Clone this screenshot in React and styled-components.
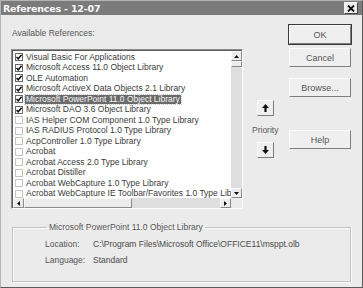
import React from 'react'
import styled, { createGlobalStyle } from 'styled-components'

const GlobalStyle = createGlobalStyle`
    html, body {
        margin: 0;
        padding: 0;
        background: #ebebeb;
    }
`;

const Window = styled.div`
    width: 363px;
    height: 288px;
    box-sizing: border-box;
    display: flex;
    flex-direction: column;
    background: #ebebeb;
    border: 1px solid #b4b4b4;
    border-right-color: #5a5a5a;
    border-bottom-color: #5a5a5a;
    font-family: "Liberation Sans", Arial, sans-serif;
    font-size: 8.5px;
    color: #4e4e4e;
    overflow: hidden;
`;

const TitleBar = styled.div`
    height: 14px;
    flex: none;
    display: flex;
    align-items: center;
    justify-content: space-between;
    padding: 0 4px 0 2px;
    background: #7b7b7b;
    color: #fafafa;
    font-family: "DejaVu Sans", sans-serif;
    font-weight: bold;
    font-size: 9.5px;
    letter-spacing: -0.2px;
`;

const CloseBox = styled.div`
    width: 12px;
    height: 10px;
    display: flex;
    align-items: center;
    justify-content: center;
    background: #ececec;
    border: 1px solid #f8f8f8;
    border-right-color: #444;
    border-bottom-color: #444;
`;

const Body = styled.div`
    flex: 1;
    display: flex;
    flex-direction: column;
    padding: 10px 11px 4px 10px;
`;

const Top = styled.div`
    display: flex;
`;

const LeftCol = styled.div`
    width: 233px;
    display: flex;
    flex-direction: column;
`;

const Label = styled.div`
    height: 23px;
    padding-left: 1px;
    line-height: 14px;
    margin-top: 1px;
    color: #555;
`;

const ListBox = styled.div`
    height: 160px;
    box-sizing: border-box;
    display: grid;
    grid-template-columns: 1fr 11px;
    grid-template-rows: 1fr 10px;
    border: 1px solid #8c8c8c;
    border-right-color: #fdfdfd;
    border-bottom-color: #fdfdfd;
    box-shadow: inset 1px 1px 0 #5c5c5c;
    padding: 1px 0 0 1px;
    background: #fff;
`;

const Items = styled.div`
    overflow: hidden;
    padding-top: 1px;
`;

const Row = styled.div`
    height: 10.5px;
    display: flex;
    align-items: center;
    padding-left: 2px;
    white-space: nowrap;
    color: #3a3a3a;
`;

const Box = styled.span`
    width: 6px;
    height: 6px;
    flex: none;
    display: flex;
    align-items: center;
    justify-content: center;
    border: 1px solid ${p => (p.$checked ? '#6a6a6a' : '#c4c4c4')};
    background: #fff;
    margin-right: 2px;
`;

const ItemText = styled.span`
    padding: 0 1px;
    line-height: 9px;
    background: ${p => (p.$selected ? '#6a6a6a' : 'transparent')};
    color: ${p => (p.$selected ? '#f4f4f4' : 'inherit')};
    outline: ${p => (p.$selected ? '1px dotted #c8c8c8' : 'none')};
`;

const VScroll = styled.div`
    display: flex;
    flex-direction: column;
    background: #dedede;
`;

const HScroll = styled.div`
    display: flex;
    background: #dedede;
`;

const Corner = styled.div`
    background: #ebebeb;
`;

const ArrowBtn = styled.div`
    width: 11px;
    height: 10px;
    flex: none;
    box-sizing: border-box;
    display: flex;
    align-items: center;
    justify-content: center;
    background: #ececec;
    border: 1px solid #fafafa;
    border-right-color: #8a8a8a;
    border-bottom-color: #8a8a8a;
`;

const Thumb = styled.div`
    box-sizing: border-box;
    background: #ececec;
    border: 1px solid #fafafa;
    border-right-color: #8a8a8a;
    border-bottom-color: #8a8a8a;
    ${p => (p.$vertical ? 'height: 6px;' : 'width: 108px;')}
`;

const Spacer = styled.div`
    flex: 1;
`;

const MidCol = styled.div`
    width: 30px;
    margin-left: 7px;
    display: flex;
    flex-direction: column;
    align-items: center;
    padding-top: 75px;
`;

const MoveBtn = styled.div`
    width: 17px;
    height: 16px;
    box-sizing: border-box;
    display: flex;
    align-items: center;
    justify-content: center;
    background: #efefef;
    border: 1px solid #fbfbfb;
    border-right-color: #7c7c7c;
    border-bottom-color: #7c7c7c;
`;

const Priority = styled.div`
    margin: 8px 0 6px;
    line-height: 12px;
    color: #5a5a5a;
`;

const RightCol = styled.div`
    width: 62px;
    margin-left: 9px;
    display: flex;
    flex-direction: column;
`;

const Button = styled.div`
    height: 19px;
    box-sizing: border-box;
    margin-top: ${p => p.$gap || 0}px;
    display: flex;
    align-items: center;
    justify-content: center;
    background: #efefef;
    color: #555;
    font-size: 9px;
    border: 1px solid #fbfbfb;
    border-right-color: #7e7e7e;
    border-bottom-color: #7e7e7e;
    box-shadow: ${p => (p.$default ? '0 0 0 1px #3a3a3a' : 'none')};
`;

const Group = styled.fieldset`
    margin: 13px 0 0 1px;
    padding: 6px 0 0 32px;
    height: 60px;
    box-sizing: border-box;
    border: 1px solid #c2c2c2;
    box-shadow: 1px 1px 0 #fbfbfb, inset 1px 1px 0 #fbfbfb;
    display: grid;
    grid-template-columns: 48px 1fr;
    row-gap: 4px;
    align-content: start;
`;

const Legend = styled.legend`
    margin-left: 2px;
    padding: 0 2px;
    color: #555;
    line-height: 10px;
`;

const InfoLabel = styled.span`
    line-height: 12px;
    color: #555;
`;

const InfoValue = styled.span`
    line-height: 12px;
    color: #4a4a4a;
`;

const Check = () => (
    <svg width="6" height="6" viewBox="0 0 6 6">
        <path d="M0.5 3 L2.2 4.8 L5.6 0.8" fill="none" stroke="#111" strokeWidth="1.5" />
    </svg>
);

const Tri = ({ dir, size = 5 }) => {
    const pts = {
        up: '0,4 5,4 2.5,1',
        down: '0,1 5,1 2.5,4',
        left: '4,0 4,5 1,2.5',
        right: '1,0 1,5 4,2.5',
    }[dir];
    return (
        <svg width={size} height={size} viewBox="0 0 5 5">
            <polygon points={pts} fill="#111" />
        </svg>
    );
};

const BigArrow = ({ down }) => (
    <svg width="7" height="8" viewBox="0 0 7 8">
        <g transform={down ? 'rotate(180 3.5 4)' : undefined}>
            <polygon points="3.5,0 7,4 4.6,4 4.6,8 2.4,8 2.4,4 0,4" fill="#111" />
        </g>
    </svg>
);

const references = [
    { name: 'Visual Basic For Applications', checked: true },
    { name: 'Microsoft Access 11.0 Object Library', checked: true },
    { name: 'OLE Automation', checked: true },
    { name: 'Microsoft ActiveX Data Objects 2.1 Library', checked: true },
    { name: 'Microsoft PowerPoint 11.0 Object Library', checked: true, selected: true },
    { name: 'Microsoft DAO 3.6 Object Library', checked: true },
    { name: 'IAS Helper COM Component 1.0 Type Library' },
    { name: 'IAS RADIUS Protocol 1.0 Type Library' },
    { name: 'AcpController 1.0 Type Library' },
    { name: 'Acrobat' },
    { name: 'Acrobat Access 2.0 Type Library' },
    { name: 'Acrobat Distiller' },
    { name: 'Acrobat WebCapture 1.0 Type Library' },
    { name: 'Acrobat WebCapture IE Toolbar/Favorites 1.0 Type Library' },
];

export default function App() {
    return (
        <>
            <GlobalStyle />
            <Window>
                <TitleBar>
                    References - 12-07
                    <CloseBox>
                        <svg width="8" height="7" viewBox="0 0 8 7">
                            <path d="M1 0.5 L7 6.5 M7 0.5 L1 6.5" stroke="#111" strokeWidth="1.8" />
                        </svg>
                    </CloseBox>
                </TitleBar>
                <Body>
                    <Top>
                        <LeftCol>
                            <Label>Available References:</Label>
                            <ListBox>
                                <Items>
                                    {references.map(r => (
                                        <Row key={r.name}>
                                            <Box $checked={r.checked}>{r.checked && <Check />}</Box>
                                            <ItemText $selected={r.selected}>{r.name}</ItemText>
                                        </Row>
                                    ))}
                                </Items>
                                <VScroll>
                                    <ArrowBtn><Tri dir="up" /></ArrowBtn>
                                    <Thumb $vertical />
                                    <Spacer />
                                    <ArrowBtn><Tri dir="down" /></ArrowBtn>
                                </VScroll>
                                <HScroll>
                                    <ArrowBtn><Tri dir="left" /></ArrowBtn>
                                    <Thumb />
                                    <Spacer />
                                    <ArrowBtn><Tri dir="right" /></ArrowBtn>
                                </HScroll>
                                <Corner />
                            </ListBox>
                        </LeftCol>
                        <MidCol>
                            <MoveBtn><BigArrow /></MoveBtn>
                            <Priority>Priority</Priority>
                            <MoveBtn><BigArrow down /></MoveBtn>
                        </MidCol>
                        <RightCol>
                            <Button $default>OK</Button>
                            <Button $gap={4}>Cancel</Button>
                            <Button $gap={11}>Browse...</Button>
                            <Button $gap={33}>Help</Button>
                        </RightCol>
                    </Top>
                    <Group>
                        <Legend>Microsoft PowerPoint 11.0 Object Library</Legend>
                        <InfoLabel>Location:</InfoLabel>
                        <InfoValue>C:\Program Files\Microsoft Office\OFFICE11\msppt.olb</InfoValue>
                        <InfoLabel>Language:</InfoLabel>
                        <InfoValue>Standard</InfoValue>
                    </Group>
                </Body>
            </Window>
        </>
    )
}
